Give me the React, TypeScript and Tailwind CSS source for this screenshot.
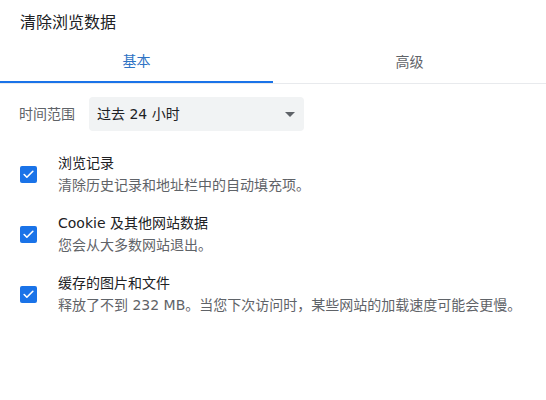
import { Check } from "lucide-react";

const items = [
  { title: "浏览记录", desc: "清除历史记录和地址栏中的自动填充项。" },
  { title: "Cookie 及其他网站数据", desc: "您会从大多数网站退出。" },
  { title: "缓存的图片和文件", desc: "释放了不到 232 MB。当您下次访问时，某些网站的加载速度可能会更慢。" },
];

export default function App() {
  return (
    <div
      className="h-[400px] w-[546px] overflow-hidden bg-white text-[#202124]"
      style={{ fontFamily: '"DejaVu Sans", "Noto Sans CJK SC", sans-serif' }}
    >
      {/* Dialog title */}
      <div className="flex h-[44px] items-center px-5 pt-[2px] text-[16px]">清除浏览数据</div>

      {/* Tabs */}
      <div className="flex h-[40px] border-b border-[#e8eaed] text-[14px]">
        <div className="flex flex-1 items-center justify-center border-b-2 border-[#1a73e8] pb-[3px] text-[#2f73c4]">
          基本
        </div>
        <div className="flex flex-1 items-center justify-center pb-[3px] text-[#5f6368]">高级</div>
      </div>

      {/* Time range */}
      <div className="mt-[13px] flex items-center gap-[14px] pl-[19px] text-[14px]">
        <span className="text-[#5f6368]">时间范围</span>
        <div className="flex h-[34px] w-[215px] items-center justify-between rounded-[4px] bg-[#f1f3f4] pl-[8px] pr-[9px]">
          <span>过去 24 小时</span>
          <span className="h-0 w-0 border-x-[5px] border-t-[5px] border-x-transparent border-t-[#5f6368]" />
        </div>
      </div>

      {/* Checkbox list */}
      <div className="mt-[21px] flex flex-col gap-[16px] text-[14px] leading-[22px]">
        {items.map((it) => (
          <div key={it.title} className="flex items-center">
            <div className="ml-[20px] mr-[21px] flex h-[17px] w-[17px] items-center justify-center rounded-[2px] bg-[#1a73e8]">
              <Check className="h-[13px] w-[13px] text-white" strokeWidth={3} />
            </div>
            <div className="flex flex-col">
              <span>{it.title}</span>
              <span className="text-[#5f6368]">{it.desc}</span>
            </div>
          </div>
        ))}
      </div>
    </div>
  );
}
